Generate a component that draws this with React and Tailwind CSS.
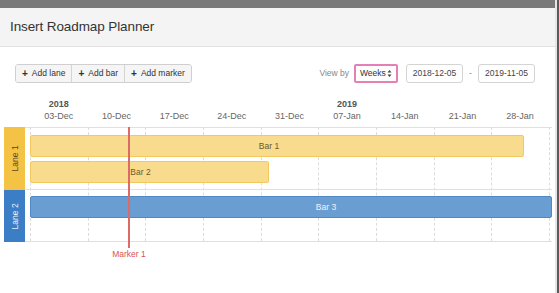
import React from "react";

const COL = 57.67;
const weeks = ["03-Dec", "10-Dec", "17-Dec", "24-Dec", "31-Dec", "07-Jan", "14-Jan", "21-Jan", "28-Jan"];
const years = { 0: "2018", 5: "2019" };

const ToolButton = ({ label, last }) => (
  <button
    className={`h-full flex items-center gap-[4px] px-[6px] bg-[#f5f5f5] text-[8.5px] text-[#333] whitespace-nowrap ${
      last ? "" : "border-r border-[#d4d4d4]"
    }`}
  >
    <span className="font-bold text-[10px] leading-none">+</span>
    {label}
  </button>
);

const Bar = ({ label, width, color, className = "" }) => (
  <div
    className={`h-[22px] flex items-center justify-center text-[8.5px] rounded-[2px] border ${
      color === "blue"
        ? "bg-[#6a9ed3] border-[#4f88c4] text-[#eef4fb]"
        : "bg-[#f9db8e] border-[#f3c95f] text-[#6b5a2a]"
    } ${className}`}
    style={{ width }}
  >
    {label}
  </div>
);

export default function App() {
  return (
    <div
      className="w-[559px] h-[293px] flex overflow-hidden bg-white"
      style={{ fontFamily: '"Liberation Sans", Arial, sans-serif' }}
    >
      <div className="w-[555px] flex flex-col">
        <div className="h-[8px] bg-[#797979]" />
        <div className="h-[39px] bg-[#f4f4f4] border-b border-[#e2e2e2] flex items-center px-[10px]">
          <h1 className="text-[13.5px] text-[#333] tracking-[-0.1px]">Insert Roadmap Planner</h1>
        </div>

        {/* toolbar */}
        <div className="mt-[17px] h-[19px] flex items-center pl-[15px] pr-[20px]">
          <div className="h-[19px] flex border border-[#cfcfcf] rounded-[3px] overflow-hidden">
            <ToolButton label="Add lane" />
            <ToolButton label="Add bar" />
            <ToolButton label="Add marker" last />
          </div>
          <div className="ml-auto flex items-center text-[8.5px] whitespace-nowrap">
            <span className="text-[#888] mr-[5px]">View by</span>
            <div className="h-[19px] w-[44px] flex items-center justify-between pl-[4px] pr-[4px] border-2 border-[#e77fb7] rounded-[2px] text-[#333]">
              Weeks
              <svg width="5" height="9" viewBox="0 0 5 9">
                <path d="M0.5 3.5 L2.5 1 L4.5 3.5Z M0.5 5.5 L2.5 8 L4.5 5.5Z" fill="#444" />
              </svg>
            </div>
            <div className="ml-[8px] h-[19px] w-[57px] flex items-center justify-center border border-[#d4d4d4] rounded-[3px] text-[#444]">
              2018-12-05
            </div>
            <span className="w-[15px] text-center text-[#888]">-</span>
            <div className="h-[19px] w-[57px] flex items-center justify-center border border-[#d4d4d4] rounded-[3px] text-[#444]">
              2019-11-05
            </div>
          </div>
        </div>

        {/* timeline header */}
        <div className="mt-[15px] pl-[30px] flex">
          {weeks.map((w, i) => (
            <div key={w} className="flex flex-col items-center shrink-0" style={{ width: COL }}>
              <span className="h-[12px] text-[9px] font-bold text-[#555] leading-[12px]">{years[i] || ""}</span>
              <span className="text-[9px] text-[#666] leading-[12px]">{w}</span>
            </div>
          ))}
        </div>

        {/* lanes */}
        <div className="relative mt-[5px] pl-[4px]">
          <div className="absolute left-[30px] top-0 h-[114px] flex pointer-events-none">
            {Array.from({ length: 10 }).map((_, i) => (
              <div
                key={i}
                className="h-full border-l border-dashed border-[#dcdcdc] shrink-0"
                style={{ width: i < 9 ? COL : 3 }}
              />
            ))}
          </div>

          <div className="flex border-t border-[#e0e0e0] ml-[21px] w-[527px]" />
          <div className="flex -mt-px">
            <div className="w-[21px] h-[63px] bg-[#f4c244] flex items-center justify-center">
              <span className="-rotate-90 whitespace-nowrap text-[8.5px] text-[#5a4a1c]">Lane 1</span>
            </div>
            <div className="relative flex flex-col gap-[4px] pt-[8px] pl-[5px] w-[527px] border-b border-[#e0e0e0]">
              <Bar label="Bar 1" width={494} className="pr-[16px]" />
              <Bar label="Bar 2" width={239} className="pr-[18px]" />
            </div>
          </div>
          <div className="flex">
            <div className="w-[21px] h-[52px] bg-[#3b7ec6] flex items-center justify-center">
              <span className="-rotate-90 whitespace-nowrap text-[8.5px] text-[#e8f0fa]">Lane 2</span>
            </div>
            <div className="relative pt-[6px] pl-[5px] w-[527px] border-b border-[#e0e0e0]">
              <Bar label="Bar 3" width={522} color="blue" className="pl-[70px]" />
            </div>
          </div>

          {/* marker */}
          <div className="absolute top-0 left-[128px] w-[2px] h-[121px] bg-[#dc6b66]" />
          <div className="absolute top-[121px] left-[89px] w-[80px] text-center text-[8.5px] text-[#d9534f]">
            Marker 1
          </div>
        </div>
      </div>
      <div className="w-[2px] bg-[#e6e6e6]" />
      <div className="w-[2px] bg-[#5a5a5a]" />
    </div>
  );
}
